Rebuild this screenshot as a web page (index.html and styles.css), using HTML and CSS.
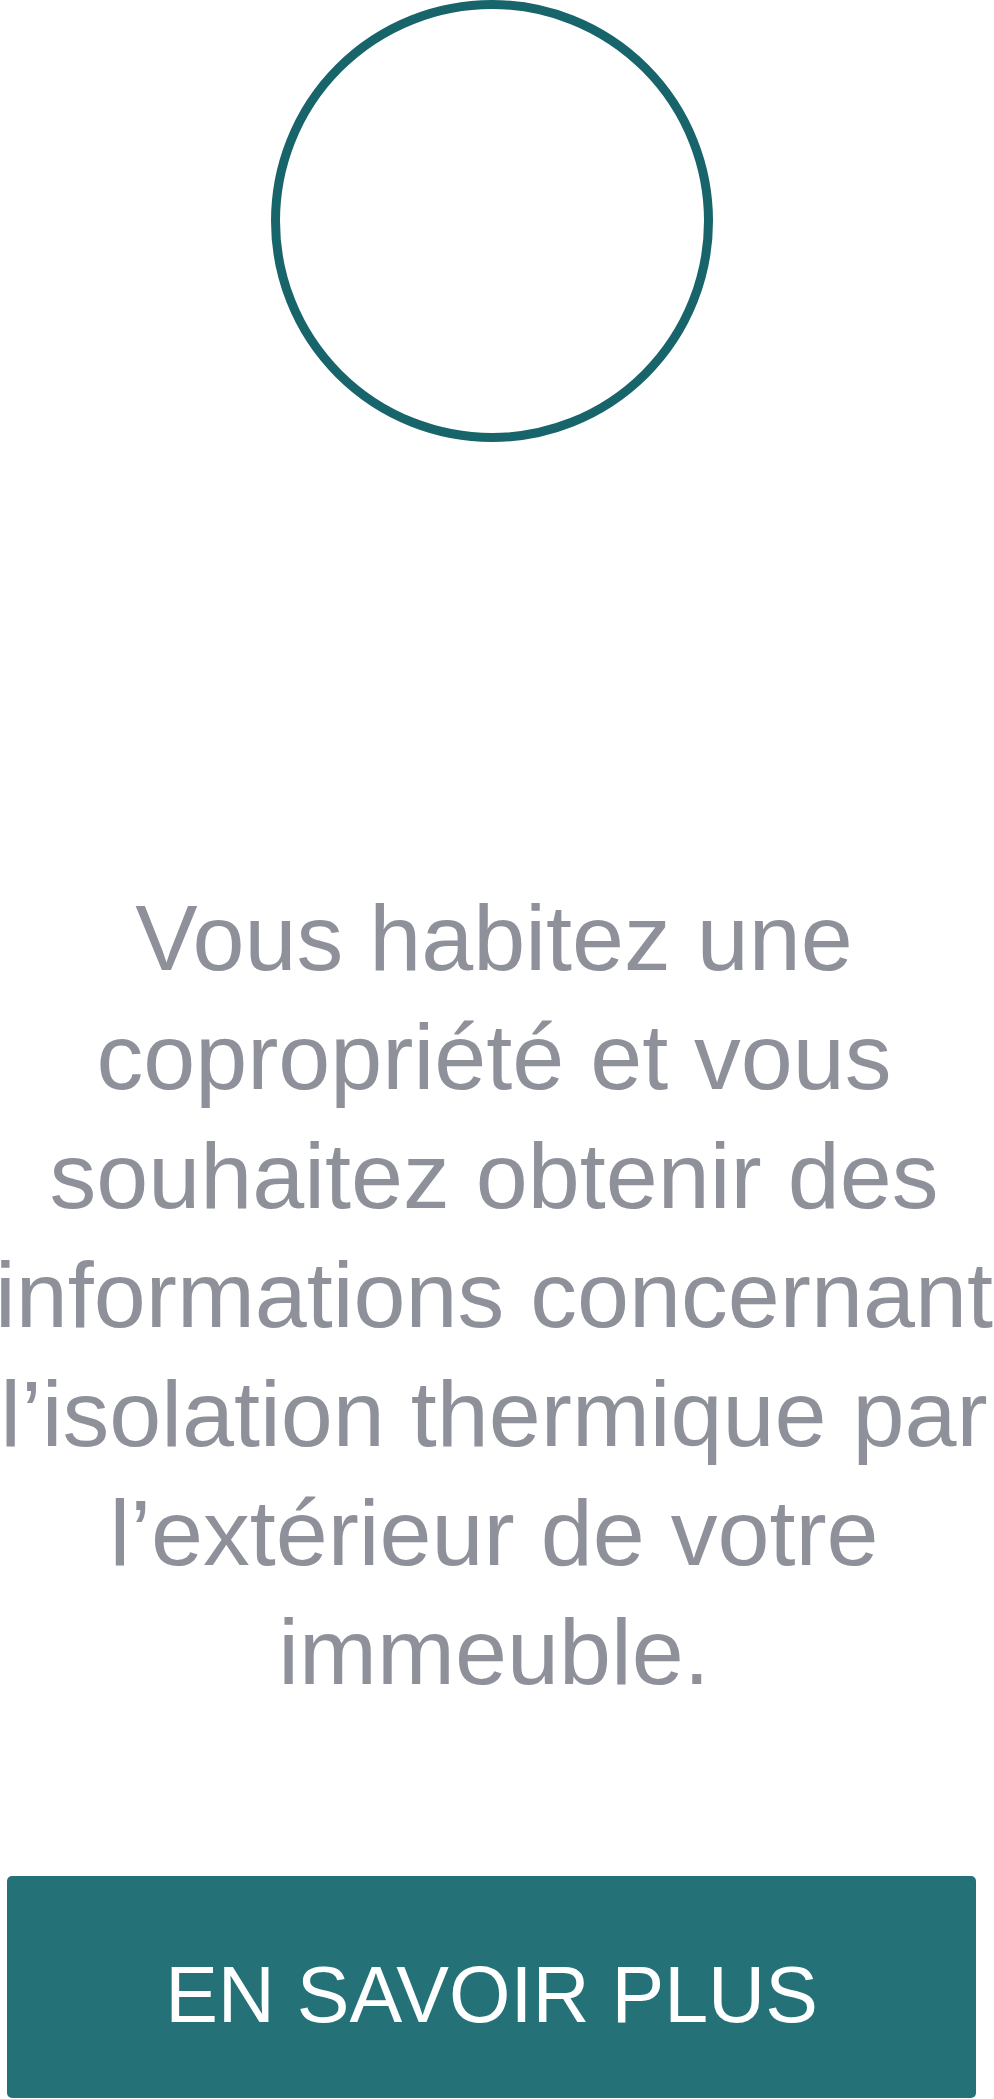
FILE: index.html
```html
<!DOCTYPE html>
<html lang="fr">
<head>
<meta charset="utf-8">
<title>Isolation thermique par l’extérieur</title>
<link rel="stylesheet" href="styles.css">
</head>
<body>
  <main class="page">
    <div class="media">
      <div class="ring"></div>
    </div>
    <p class="intro">Vous habitez une copropriété et vous souhaitez obtenir des informations concernant l’isolation thermique par l’extérieur de votre immeuble.</p>
    <a class="cta" href="#">EN SAVOIR PLUS</a>
  </main>
</body>
</html>
```

FILE: styles.css
```css
html, body {
  margin: 0;
  padding: 0;
  background: #ffffff;
}

body {
  font-family: "Liberation Sans", Arial, sans-serif;
}

.page {
  display: flex;
  flex-direction: column;
  width: 994px;
}

.media {
  display: flex;
  justify-content: center;
  margin-left: 7px;
  width: 969px;
}

.ring {
  width: 442px;
  height: 442px;
  box-sizing: border-box;
  border: 9px solid #17646b;
  border-radius: 50%;
}

.intro {
  margin: 436px -20px 0 -26px;
  font-size: 93.5px;
  line-height: 119px;
  color: #8f919a;
  text-align: center;
}

.cta {
  display: flex;
  align-items: center;
  justify-content: center;
  box-sizing: border-box;
  margin: 165px 0 0 7px;
  width: 969px;
  height: 222px;
  padding-top: 15px;
  background: #247278;
  border-radius: 5px;
  color: #ffffff;
  font-size: 79px;
  text-decoration: none;
}
```
